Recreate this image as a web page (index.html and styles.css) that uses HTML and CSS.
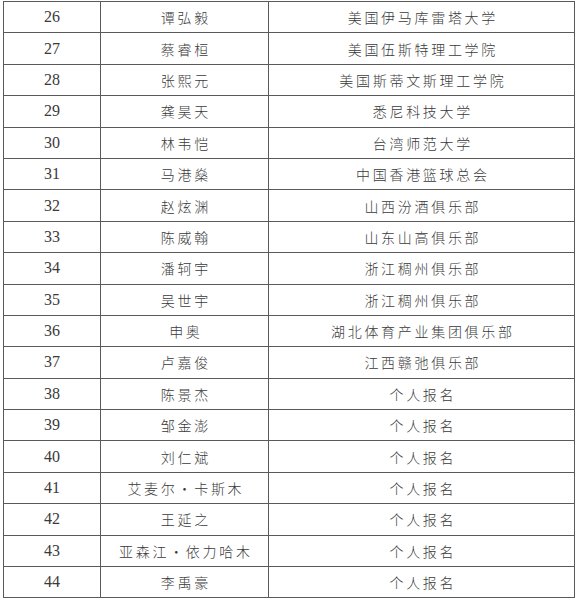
FILE: index.html
```html
<!DOCTYPE html>
<html lang="zh-CN">
<head>
<meta charset="utf-8">
<title>名单</title>
<link rel="stylesheet" href="styles.css">
</head>
<body>
<div class="sheet">
  <div class="num">26</div><div class="name">谭弘毅</div><div class="org">美国伊马库雷塔大学</div>
  <div class="num">27</div><div class="name">蔡睿桓</div><div class="org">美国伍斯特理工学院</div>
  <div class="num">28</div><div class="name">张熙元</div><div class="org">美国斯蒂文斯理工学院</div>
  <div class="num">29</div><div class="name">龚昊天</div><div class="org">悉尼科技大学</div>
  <div class="num">30</div><div class="name">林韦恺</div><div class="org">台湾师范大学</div>
  <div class="num">31</div><div class="name">马港燊</div><div class="org">中国香港篮球总会</div>
  <div class="num">32</div><div class="name">赵炫渊</div><div class="org">山西汾酒俱乐部</div>
  <div class="num">33</div><div class="name">陈威翰</div><div class="org">山东山高俱乐部</div>
  <div class="num">34</div><div class="name">潘轲宇</div><div class="org">浙江稠州俱乐部</div>
  <div class="num">35</div><div class="name">吴世宇</div><div class="org">浙江稠州俱乐部</div>
  <div class="num">36</div><div class="name">申奥</div><div class="org">湖北体育产业集团俱乐部</div>
  <div class="num">37</div><div class="name">卢嘉俊</div><div class="org">江西赣弛俱乐部</div>
  <div class="num">38</div><div class="name">陈景杰</div><div class="org">个人报名</div>
  <div class="num">39</div><div class="name">邹金澎</div><div class="org">个人报名</div>
  <div class="num">40</div><div class="name">刘仁斌</div><div class="org">个人报名</div>
  <div class="num">41</div><div class="name">艾麦尔·卡斯木</div><div class="org">个人报名</div>
  <div class="num">42</div><div class="name">王延之</div><div class="org">个人报名</div>
  <div class="num">43</div><div class="name">亚森江·依力哈木</div><div class="org">个人报名</div>
  <div class="num">44</div><div class="name">李禹豪</div><div class="org">个人报名</div>
</div>
</body>
</html>
```
FILE: styles.css
```css
html, body {
  margin: 0;
  padding: 0;
  background: #ffffff;
}
body {
  padding: 1px 0 0 3px;
}
.sheet {
  display: grid;
  grid-template-columns: 96px 167px 305px;
  grid-auto-rows: 30.4px;
  gap: 1px;
  padding: 1px;
  width: max-content;
  background: #5a5a5a;
}
.sheet > div {
  background: #ffffff;
  display: flex;
  align-items: center;
  justify-content: center;
  color: #3a3a3a;
}
.num {
  font-family: "Liberation Serif", serif;
  font-size: 16px;
}
.name, .org {
  font-family: "Noto Sans CJK SC", sans-serif;
  font-weight: 300;
  font-size: 14px;
  letter-spacing: 2.7px;
  padding-left: 2.7px;
}
```
